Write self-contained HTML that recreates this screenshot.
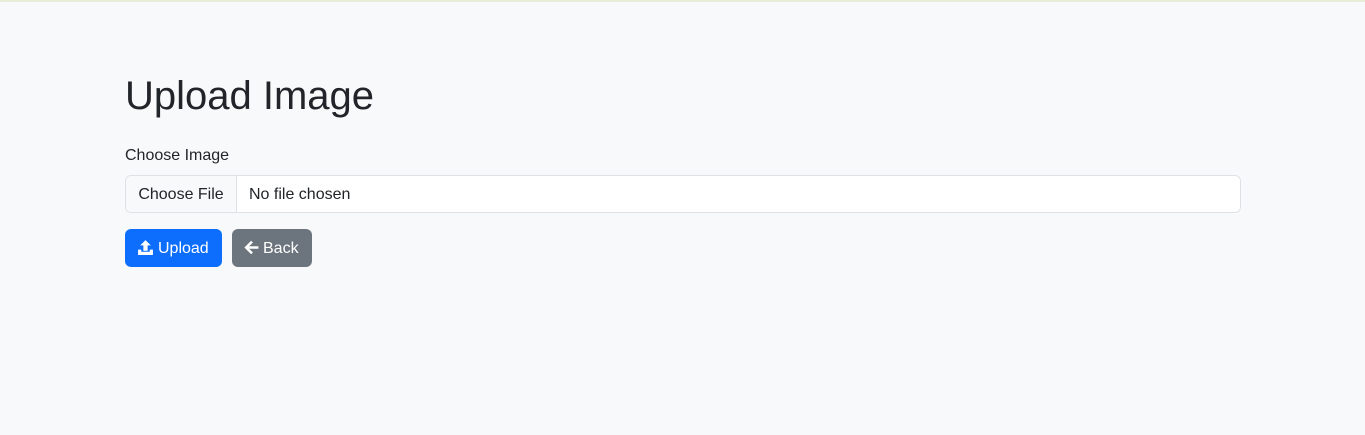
<!DOCTYPE html>
<html><head><style>
body{margin:0;background:#f8f9fa;font-family:"Liberation Sans",Arial,sans-serif;color:#212529;width:1365px;height:435px;overflow:hidden;position:relative}
.top{position:absolute;left:0;top:0;width:1365px;height:2px;background:#e9ecd9}
h1{position:absolute;left:125px;top:72px;margin:0;font-size:40px;font-weight:400;line-height:48px}
.lbl{position:absolute;left:125px;top:146px;font-size:16px;line-height:19px}
.file{position:absolute;left:125px;top:175px;width:1114px;height:36px;border:1px solid #dee2e6;border-radius:6px;background:#fff;font-size:16px;overflow:hidden}
.file .b{position:absolute;left:0;top:0;width:110px;height:36px;background:#f8f9fa;border-right:1px solid #dee2e6;line-height:37px;text-align:center}
.file .t{position:absolute;left:123px;top:0;line-height:37px}
.btn{position:absolute;top:229px;height:38px;border-radius:6px;color:#fff;font-size:16px;line-height:39px}
.up{left:125px;width:97px;background:#0d6efd}
.bk{left:232px;width:80px;background:#6c757d}
svg{position:absolute;top:10px}
</style></head><body>
<div class="top"></div>
<h1>Upload Image</h1>
<div class="lbl">Choose Image</div>
<div class="file"><div class="b">Choose File</div><div class="t">No file chosen</div></div>
<div class="btn up"><svg style="left:12px" width="17" height="17" viewBox="0 0 16 16"><path d="M8 1L3 6h3v5h4V6h3z" fill="#fff"/><path d="M1 10v5h14v-5h-3v2H4v-2z" fill="#fff"/></svg><span style="position:absolute;left:33px">Upload</span></div>
<div class="btn bk"><svg style="left:11px" width="17" height="17" viewBox="0 0 16 16"><path d="M14.5 8H3M8.5 2.5L3 8l5.5 5.5" stroke="#fff" stroke-width="2.4" fill="none"/></svg><span style="position:absolute;left:31px">Back</span></div>
</body></html>
